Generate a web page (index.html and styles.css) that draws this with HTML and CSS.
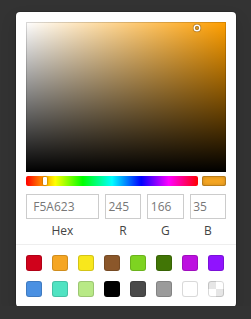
FILE: index.html
```html
<!DOCTYPE html>
<html lang="en">
<head>
    <meta charset="UTF-8">
    <meta name="viewport" content="width=device-width, initial-scale=1.0">
    <title>Color Picker</title>
    <link rel="stylesheet" href="styles.css">
</head>
<body>

<div class="picker">
    <!-- saturation / value area -->
    <div class="saturation">
        <div class="sat-pointer"></div>
    </div>

    <!-- hue slider + current color -->
    <div class="controls">
        <div class="hue">
            <div class="hue-pointer"></div>
        </div>
        <div class="active-color"></div>
    </div>

    <!-- inputs -->
    <div class="fields">
        <div class="field field-hex">
            <div class="input">F5A623</div>
            <div class="label">Hex</div>
        </div>
        <div class="field">
            <div class="input">245</div>
            <div class="label">R</div>
        </div>
        <div class="field">
            <div class="input">166</div>
            <div class="label">G</div>
        </div>
        <div class="field">
            <div class="input">35</div>
            <div class="label">B</div>
        </div>
    </div>

    <!-- preset swatches -->
    <div class="presets">
        <div class="swatch" style="background-color: #D0021B;"></div>
        <div class="swatch" style="background-color: #F5A623;"></div>
        <div class="swatch" style="background-color: #F8E71C;"></div>
        <div class="swatch" style="background-color: #8B572A;"></div>
        <div class="swatch" style="background-color: #7ED321;"></div>
        <div class="swatch" style="background-color: #417505;"></div>
        <div class="swatch" style="background-color: #BD10E0;"></div>
        <div class="swatch" style="background-color: #9013FE;"></div>
        <div class="swatch" style="background-color: #4A90E2;"></div>
        <div class="swatch" style="background-color: #50E3C2;"></div>
        <div class="swatch" style="background-color: #B8E986;"></div>
        <div class="swatch" style="background-color: #000000;"></div>
        <div class="swatch" style="background-color: #4A4A4A;"></div>
        <div class="swatch" style="background-color: #9B9B9B;"></div>
        <div class="swatch" style="background-color: #FFFFFF;"></div>
        <div class="swatch swatch-clear"></div>
    </div>
</div>

</body>
</html>
```

FILE: styles.css
```css
body {
    margin: 0;
    padding: 12px 0 0 16px;
    background-color: #333;
    font-family: "Open Sans", Arial, sans-serif;
}
.picker {
    width: 200px;
    padding: 10px 10px 0;
    background-color: #fff;
    border-radius: 4px;
    box-shadow: 0 0 0 1px rgba(0, 0, 0, 0.15), 0 8px 16px rgba(0, 0, 0, 0.15);
}
.saturation {
    position: relative;
    height: 150px;
    background:
        linear-gradient(to top, #000, rgba(0, 0, 0, 0)),
        linear-gradient(to right, #fff, rgba(255, 255, 255, 0)),
        hsl(37.4, 100%, 50%);
    box-shadow: inset 0 0 0 1px rgba(0, 0, 0, 0.15);
}
.sat-pointer {
    position: absolute;
    left: 85.7%;
    top: 4%;
    width: 4px;
    height: 4px;
    border-radius: 50%;
    transform: translate(-2px, -2px);
    box-shadow: 0 0 0 1.5px #fff, inset 0 0 1px 1px rgba(0, 0, 0, 0.3), 0 0 1px 2px rgba(0, 0, 0, 0.4);
}
.controls {
    display: flex;
    gap: 4px;
    margin-top: 4px;
}
.hue {
    position: relative;
    flex: 1;
    height: 10px;
    border-radius: 2px;
    background: linear-gradient(to right, #f00 0%, #ff0 17%, #0f0 33%, #0ff 50%, #00f 67%, #f0f 83%, #f00 100%);
}
.hue-pointer {
    position: absolute;
    left: 10.4%;
    top: 1px;
    width: 4px;
    height: 8px;
    margin-left: -1px;
    background-color: #fff;
    border-radius: 1px;
    box-shadow: 0 0 2px rgba(0, 0, 0, 0.6);
}
.active-color {
    width: 24px;
    height: 10px;
    border-radius: 2px;
    background-color: #F5A623;
    box-shadow: inset 0 0 0 1px rgba(0, 0, 0, 0.15), inset 0 0 4px rgba(0, 0, 0, 0.25);
}
.fields {
    display: flex;
    margin-top: 8px;
}
.field {
    flex: 1;
    padding-left: 6px;
}
.field-hex {
    flex: 2;
    padding-left: 0;
}
.input {
    height: 25px;
    line-height: 25px;
    padding-left: 10%;
    font-size: 12px;
    color: #777;
    box-shadow: inset 0 0 0 1px #ccc;
}
.label {
    padding-top: 4px;
    line-height: 15px;
    font-size: 12px;
    color: #444;
    text-align: center;
}
.presets {
    display: flex;
    flex-wrap: wrap;
    margin: 6px -10px -1px;
    padding: 10px 0 0 10px;
    border-top: 1px solid #eee;
}
.swatch {
    width: 16px;
    height: 16px;
    margin: 0 10px 10px 0;
    border-radius: 3px;
    box-shadow: inset 0 0 0 1px rgba(0, 0, 0, 0.15);
}
.swatch-clear {
    background:
        linear-gradient(#e6e6e6, #e6e6e6) 0 0 / 8px 8px no-repeat,
        linear-gradient(#e6e6e6, #e6e6e6) 8px 8px / 8px 8px no-repeat,
        #fff;
}
```
